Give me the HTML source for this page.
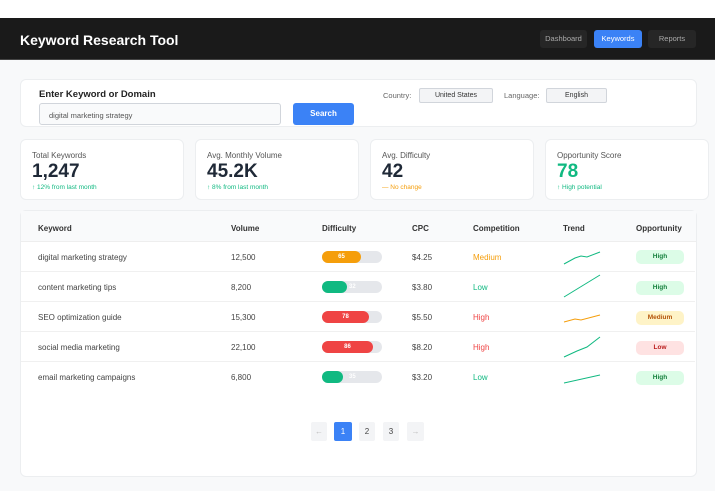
<!DOCTYPE html>
<html><head><meta charset="utf-8"><style>
*{box-sizing:border-box;margin:0;padding:0}
body{width:715px;height:491px;background:#f8f9fa;font-family:"Liberation Sans",sans-serif;position:relative;overflow:hidden;color:#1f2937}
.top{position:absolute;left:0;top:0;width:715px;height:18px;background:#fff}
.hdr{position:absolute;left:0;top:18px;width:715px;height:42px;background:#1a1a1a;border-bottom:1px solid #444}
.hdr h1{position:absolute;left:20px;top:14px;font-size:14px;color:#fff;font-weight:bold}
.nav{position:absolute;top:12px;height:18px;font-size:7.5px;line-height:18px;text-align:center;border-radius:3px;background:#262626;color:#aaa}
.card{position:absolute;background:#fff;border:1px solid #eceef0;border-radius:6px}
.lbl{font-size:10px;font-weight:bold;color:#222;position:absolute}
.sel{position:absolute;height:15px;background:#f3f4f6;border:1px solid #d1d5db;border-radius:2px;font-size:7px;line-height:13px;text-align:center;color:#333}
.st .t{position:absolute;left:11px;top:11px;font-size:8px;color:#555}
.st .v{position:absolute;left:11px;top:21px;font-size:19px;font-weight:bold;color:#1f2937}
.st .s{position:absolute;left:11px;top:44px;font-size:6.5px;color:#10b981}
.th{position:absolute;top:224px;font-size:8px;font-weight:bold;color:#333}
.row{position:absolute;left:21px;width:674px;height:30px;border-bottom:1px solid #f0f0f0;font-size:8px;color:#444}
.row span{position:absolute;top:11px}
.bar{position:absolute;left:301px;top:9px;width:60px;height:12px;border-radius:6px;background:#e5e7eb}
.bar i{position:absolute;left:0;top:0;height:12px;border-radius:6px;color:#fff;font-size:6px;font-weight:bold;font-style:normal;text-align:center;line-height:12px}
.pill{position:absolute;left:615px;top:8px;width:48px;height:14px;border-radius:5px;font-size:6.5px;font-weight:bold;text-align:center;line-height:14px}
.pg{position:absolute;top:422px;height:19px;font-size:8px;line-height:19px;text-align:center;background:#f3f4f6;color:#444;border-radius:2px}
</style></head><body>
<div class="top"></div>
<div class="hdr"><h1>Keyword Research Tool</h1>
<div class="nav" style="left:540px;width:47px">Dashboard</div>
<div class="nav" style="left:594px;width:48px;background:#3b82f6;color:#fff">Keywords</div>
<div class="nav" style="left:648px;width:48px">Reports</div></div>

<div class="card" style="left:20px;top:79px;width:677px;height:48px">
<div class="lbl" style="left:18px;top:9px;font-size:9.5px">Enter Keyword or Domain</div>
<div style="position:absolute;left:18px;top:23px;width:242px;height:22px;border:1px solid #d1d5db;border-radius:3px;background:#f9fafb;font-size:7.5px;color:#555;padding:7px 9px">digital marketing strategy</div>
<div style="position:absolute;left:272px;top:23px;width:61px;height:22px;background:#3b82f6;border-radius:3px;color:#fff;font-size:8px;font-weight:bold;text-align:center;line-height:22px">Search</div>
<div style="position:absolute;left:362px;top:11px;font-size:7.5px;color:#666">Country:</div>
<div class="sel" style="left:398px;top:8px;width:74px">United States</div>
<div style="position:absolute;left:483px;top:11px;font-size:7.5px;color:#666">Language:</div>
<div class="sel" style="left:525px;top:8px;width:61px">English</div>
</div>

<div class="card st" style="left:20px;top:139px;width:164px;height:61px"><div class="t">Total Keywords</div><div class="v">1,247</div><div class="s">↑ 12% from last month</div></div>
<div class="card st" style="left:195px;top:139px;width:164px;height:61px"><div class="t">Avg. Monthly Volume</div><div class="v">45.2K</div><div class="s">↑ 8% from last month</div></div>
<div class="card st" style="left:370px;top:139px;width:164px;height:61px"><div class="t">Avg. Difficulty</div><div class="v">42</div><div class="s" style="color:#f59e0b">— No change</div></div>
<div class="card st" style="left:545px;top:139px;width:164px;height:61px"><div class="t">Opportunity Score</div><div class="v" style="color:#10b981">78</div><div class="s">↑ High potential</div></div>

<div class="card" style="left:20px;top:210px;width:677px;height:267px;background:#fff"></div>
<div style="position:absolute;left:21px;top:211px;width:675px;height:31px;background:#f9fafb;border-bottom:1px solid #eee"></div>
<div class="th" style="left:38px">Keyword</div><div class="th" style="left:231px">Volume</div><div class="th" style="left:322px">Difficulty</div><div class="th" style="left:412px">CPC</div><div class="th" style="left:473px">Competition</div><div class="th" style="left:563px">Trend</div><div class="th" style="left:636px">Opportunity</div>

<div class="row" style="top:242px"><span style="left:17px">digital marketing strategy</span><span style="left:210px">12,500</span><div class="bar"><i style="width:39px;background:#f59e0b">65</i></div><span style="left:391px">$4.25</span><span style="left:452px;color:#f59e0b">Medium</span>
<svg style="position:absolute;left:542px;top:7px" width="38" height="16"><polyline points="1,15 12,9 18,7 24,8 37,3" fill="none" stroke="#10b981" stroke-width="1"/></svg><div class="pill" style="background:#dcfce7;color:#15803d">High</div></div>
<div class="row" style="top:272px"><span style="left:17px">content marketing tips</span><span style="left:210px">8,200</span><div class="bar"><i style="width:25px;background:#10b981"></i><b style="position:absolute;left:27px;top:0;font-size:6px;color:#fff;line-height:12px">32</b></div><span style="left:391px">$3.80</span><span style="left:452px;color:#10b981">Low</span>
<svg style="position:absolute;left:542px;top:2px" width="38" height="24"><polyline points="1,23 37,1" fill="none" stroke="#10b981" stroke-width="1"/></svg><div class="pill" style="background:#dcfce7;color:#15803d;top:9px">High</div></div>
<div class="row" style="top:302px"><span style="left:17px">SEO optimization guide</span><span style="left:210px">15,300</span><div class="bar"><i style="width:47px;background:#ef4444">78</i></div><span style="left:391px">$5.50</span><span style="left:452px;color:#ef4444">High</span>
<svg style="position:absolute;left:542px;top:10px" width="38" height="12"><polyline points="1,10 12,7 18,8 37,3" fill="none" stroke="#f59e0b" stroke-width="1"/></svg><div class="pill" style="background:#fef3c7;color:#b45309;top:9px">Medium</div></div>
<div class="row" style="top:332px"><span style="left:17px">social media marketing</span><span style="left:210px">22,100</span><div class="bar"><i style="width:51px;background:#ef4444">86</i></div><span style="left:391px">$8.20</span><span style="left:452px;color:#ef4444">High</span>
<svg style="position:absolute;left:542px;top:4px" width="38" height="22"><polyline points="1,21 14,15 24,11 37,1" fill="none" stroke="#10b981" stroke-width="1"/></svg><div class="pill" style="background:#fee2e2;color:#b91c1c;top:9px">Low</div></div>
<div class="row" style="top:362px;border:none"><span style="left:17px">email marketing campaigns</span><span style="left:210px">6,800</span><div class="bar"><i style="width:21px;background:#10b981"></i><b style="position:absolute;left:27px;top:0;font-size:6px;color:#fff;line-height:12px">35</b></div><span style="left:391px">$3.20</span><span style="left:452px;color:#10b981">Low</span>
<svg style="position:absolute;left:542px;top:10px" width="38" height="12"><polyline points="1,11 37,3" fill="none" stroke="#10b981" stroke-width="1"/></svg><div class="pill" style="background:#dcfce7;color:#15803d;top:9px">High</div></div>

<div class="pg" style="left:311px;width:16px;color:#bbb">←</div>
<div class="pg" style="left:334px;width:18px;background:#3b82f6;color:#fff">1</div>
<div class="pg" style="left:359px;width:16px">2</div>
<div class="pg" style="left:383px;width:16px">3</div>
<div class="pg" style="left:407px;width:17px;color:#bbb">→</div>
</body></html>
